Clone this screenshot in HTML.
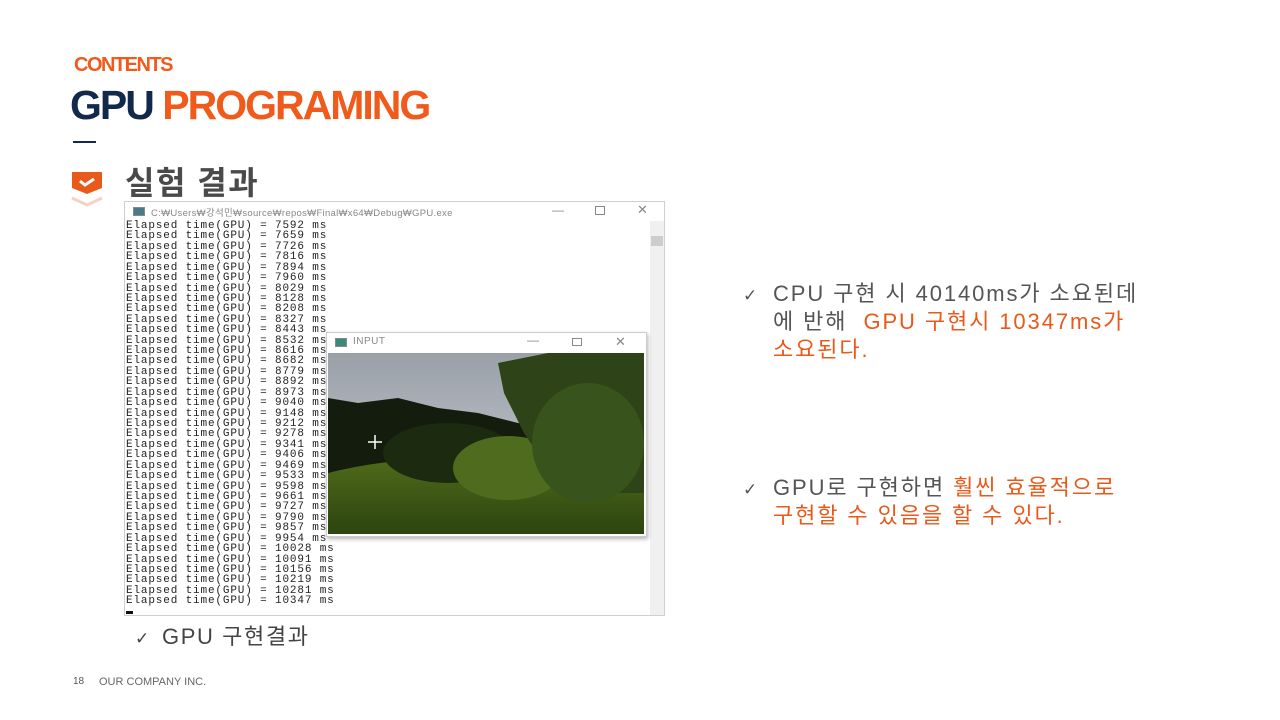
<!DOCTYPE html>
<html><head><meta charset="utf-8"><style>
body{margin:0;width:1280px;height:720px;background:#fff;position:relative;overflow:hidden;font-family:"Liberation Sans","Noto Sans CJK KR",sans-serif}
.a{position:absolute;white-space:nowrap}
.con{position:absolute;left:124px;top:201px;width:541px;height:415px;border:1px solid #cfcfcf;background:#fff;box-sizing:border-box}
.lines{position:absolute;left:1px;top:19px;font-family:"Liberation Mono","DejaVu Sans Mono",monospace;font-size:11px;line-height:10.42px;letter-spacing:0.85px;color:#222;white-space:pre}
.t{color:#555;font-size:22px;line-height:28px;letter-spacing:1.9px}
.o{color:#e8591a}
.ck{display:inline-block;width:30px;font-family:"DejaVu Sans",sans-serif;font-size:17px;letter-spacing:0}
</style></head><body>
<div class="a" style="left:74px;top:54px;font-size:20px;font-weight:bold;color:#f05a1a;letter-spacing:-1.5px">CONTENTS</div>
<div class="a" style="left:70px;top:82px;font-size:41px;font-weight:bold;letter-spacing:-2px"><span style="color:#13294b">GPU</span> <span style="color:#f05a1a">PROGRAMING</span></div>
<div class="a" style="left:73px;top:141px;width:23px;height:2px;background:#13294b"></div>
<svg class="a" style="left:70px;top:170px" width="34" height="38" viewBox="0 0 34 38"><path d="M2 2h30v16l-15 6l-15-6z" fill="#e8591a"/><path d="M10 11l5 4l9-6" stroke="#fff" stroke-width="3" fill="none"/><path d="M2 28l15 7l15-7" stroke="#f6d2c0" stroke-width="3" fill="none"/></svg>
<div class="a" style="left:125px;top:158px;font-size:32px;font-weight:bold;color:#4a4a4a;letter-spacing:1.5px">실험 결과</div>
<div class="con">
<div class="a" style="left:8px;top:5px;width:10px;height:7px;background:#4a7a8a;border:1px solid #888"></div>
<div class="a" style="left:26px;top:3px;font-size:9.5px;color:#888;letter-spacing:0.3px">C:₩Users₩강석민₩source₩repos₩Final₩x64₩Debug₩GPU.exe</div>
<div class="a" style="left:427px;top:1px;font-size:12px;color:#888">—</div>
<div class="a" style="left:470px;top:4px;width:8px;height:7px;border:1px solid #888"></div>
<div class="a" style="left:512px;top:0px;font-size:13px;color:#888">✕</div>
<div class="a" style="left:525px;top:19px;width:14px;height:394px;background:#f0f0f0"></div>
<div class="a" style="left:526px;top:34px;width:12px;height:10px;background:#cdcdcd"></div>
<div class="lines">Elapsed time(GPU) = 7592 ms
Elapsed time(GPU) = 7659 ms
Elapsed time(GPU) = 7726 ms
Elapsed time(GPU) = 7816 ms
Elapsed time(GPU) = 7894 ms
Elapsed time(GPU) = 7960 ms
Elapsed time(GPU) = 8029 ms
Elapsed time(GPU) = 8128 ms
Elapsed time(GPU) = 8208 ms
Elapsed time(GPU) = 8327 ms
Elapsed time(GPU) = 8443 ms
Elapsed time(GPU) = 8532 ms
Elapsed time(GPU) = 8616 ms
Elapsed time(GPU) = 8682 ms
Elapsed time(GPU) = 8779 ms
Elapsed time(GPU) = 8892 ms
Elapsed time(GPU) = 8973 ms
Elapsed time(GPU) = 9040 ms
Elapsed time(GPU) = 9148 ms
Elapsed time(GPU) = 9212 ms
Elapsed time(GPU) = 9278 ms
Elapsed time(GPU) = 9341 ms
Elapsed time(GPU) = 9406 ms
Elapsed time(GPU) = 9469 ms
Elapsed time(GPU) = 9533 ms
Elapsed time(GPU) = 9598 ms
Elapsed time(GPU) = 9661 ms
Elapsed time(GPU) = 9727 ms
Elapsed time(GPU) = 9790 ms
Elapsed time(GPU) = 9857 ms
Elapsed time(GPU) = 9954 ms
Elapsed time(GPU) = 10028 ms
Elapsed time(GPU) = 10091 ms
Elapsed time(GPU) = 10156 ms
Elapsed time(GPU) = 10219 ms
Elapsed time(GPU) = 10281 ms
Elapsed time(GPU) = 10347 ms</div>
<div class="a" style="left:1px;top:409px;width:7px;height:3px;background:#111"></div>
</div>
<div class="a" style="left:326px;top:332px;width:319px;height:203px;background:#fff;border:1px solid #ccc;box-shadow:1px 2px 4px rgba(0,0,0,.3)">
<div class="a" style="left:8px;top:5px;width:10px;height:7px;background:#3a8a7a;border:1px solid #888"></div>
<div class="a" style="left:26px;top:3px;font-size:10px;color:#888;letter-spacing:0.5px">INPUT</div>
<div class="a" style="left:200px;top:0;font-size:12px;color:#888">—</div>
<div class="a" style="left:245px;top:5px;width:8px;height:6px;border:1px solid #888"></div>
<div class="a" style="left:288px;top:1px;font-size:13px;color:#888">✕</div>
<svg class="a" style="left:1px;top:20px" width="316" height="181" viewBox="0 0 316 181">
<defs><linearGradient id="s" x1="0" y1="0" x2="0" y2="1"><stop offset="0" stop-color="#9aa0a8"/><stop offset="1" stop-color="#cdd2d6"/></linearGradient>
<linearGradient id="g" x1="0" y1="0" x2="0" y2="1"><stop offset="0" stop-color="#4f6a1a"/><stop offset="1" stop-color="#2c4410"/></linearGradient></defs>
<rect width="316" height="181" fill="url(#s)"/>
<path d="M0 45l30 5l40 -5l40 10l40 5l40 10l40 0l40 5l46 0v111H0z" fill="#141c0e"/>
<path d="M0 120q80-20 150-10t166 20v51H0z" fill="url(#g)"/>
<ellipse cx="120" cy="100" rx="65" ry="30" fill="#1c2a10"/>
<ellipse cx="180" cy="115" rx="55" ry="32" fill="#4e6b1e"/>
<path d="M170 10l50-10l96 0v140l-80 0l-40-60l-20-40z" fill="#2e4418"/>
<ellipse cx="260" cy="90" rx="56" ry="60" fill="#38531c"/>
<path d="M40 89h14M47 82v14" stroke="#fff" stroke-width="1.5"/>
</svg>
</div>
<div class="a t" style="left:743px;top:280px"><span class="ck">✓</span>CPU 구현 시 40140ms가 소요된데</div>
<div class="a t" style="left:773px;top:308px">에 반해 &nbsp;<span class="o">GPU 구현시 10347ms가</span></div>
<div class="a t o" style="left:773px;top:336px">소요된다.</div>
<div class="a t" style="left:743px;top:474px"><span class="ck">✓</span>GPU로 구현하면 <span class="o">훨씬 효율적으로</span></div>
<div class="a t o" style="left:773px;top:502px">구현할 수 있음을 할 수 있다.</div>
<div class="a t" style="left:135px;top:623px;color:#444;letter-spacing:1.6px"><span class="ck" style="width:27px">✓</span>GPU 구현결과</div>
<div class="a" style="left:73px;top:676px;font-size:10px;color:#555">18</div>
<div class="a" style="left:99px;top:676px;font-size:11px;color:#666">OUR COMPANY INC.</div>
</body></html>
